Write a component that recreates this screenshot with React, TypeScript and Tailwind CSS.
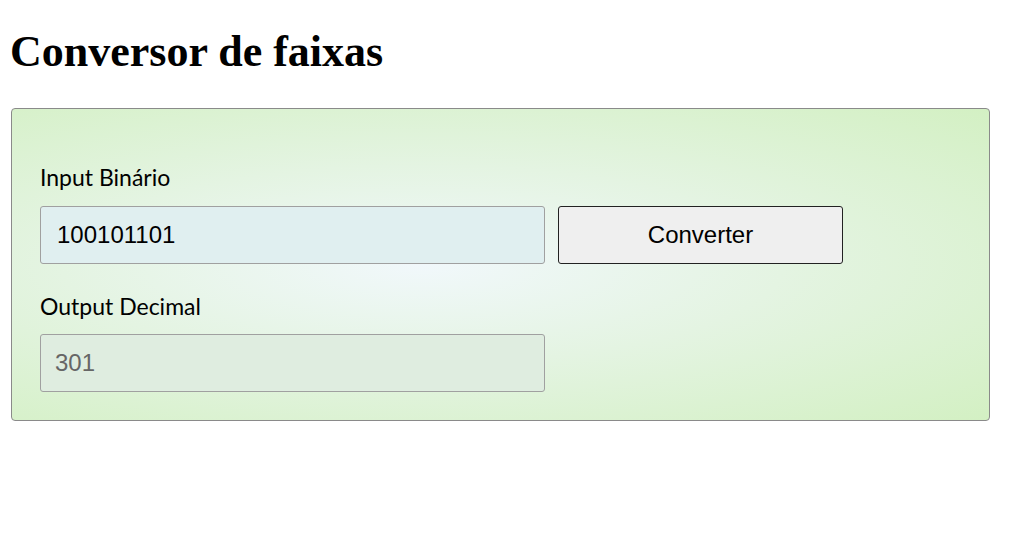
export default function App() {
  return (
    <div className="bg-white min-h-[548px] px-[11px] pt-[30px]">
      <h1 className="text-[44px] font-bold leading-none text-black ml-[-1px] font-['Liberation_Serif','Times_New_Roman',serif]">
        Conversor de faixas
      </h1>
      <div className="mt-[34px] w-[979px] h-[313px] border border-[#8a8a8a] rounded-[4px] px-[28px] pt-[54px] bg-[radial-gradient(ellipse_at_42%_50%,#f1f8fb_0%,#e4f4e2_45%,#d3f0c3_100%)]">
        <label className="block text-[23px] leading-[28px] text-black font-['Lato','Open_Sans',sans-serif]">
          Input Binário
        </label>
        <div className="flex gap-[13px] mt-[15px]">
          <input
            readOnly
            value="100101101"
            className="w-[505px] h-[58px] border border-[#a0a0a0] rounded-[3px] bg-[#e0eff0] px-[16px] text-[24px] text-black outline-none font-['Liberation_Sans',Arial,sans-serif]"
          />
          <button className="w-[285px] h-[58px] border border-[#222] rounded-[3px] bg-[#efefef] text-[24px] text-black font-['Liberation_Sans',Arial,sans-serif]">
            Converter
          </button>
        </div>
        <label className="block mt-[28px] text-[23px] leading-[28px] text-black font-['Lato','Open_Sans',sans-serif]">
          Output Decimal
        </label>
        <input
          readOnly
          value="301"
          className="block mt-[14px] w-[505px] h-[58px] border border-[#a0a0a0] rounded-[3px] bg-[#dfede0] px-[14px] text-[24px] text-[#666] outline-none font-['Liberation_Sans',Arial,sans-serif]"
        />
      </div>
    </div>
  );
}
